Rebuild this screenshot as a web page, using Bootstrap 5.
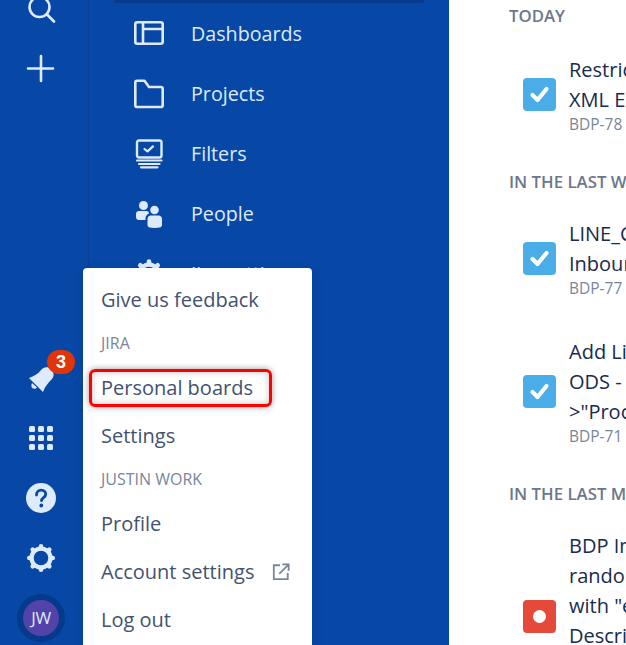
<!DOCTYPE html>
<html lang="en">
<head>
<meta charset="utf-8">
<title>Jira</title>
<link rel="stylesheet" href="https://cdn.jsdelivr.net/npm/bootstrap@5.3.0/dist/css/bootstrap.min.css">
<style>
html,body{height:645px;overflow:hidden;margin:0}
body{font-family:"Open Sans","Noto Sans",sans-serif;background:#fff}
.shell{height:645px;width:626px;overflow:hidden;position:relative}
.rail{width:89px;flex:none;background:#0747a6;border-right:1px solid #0a3f96;color:#deebff}
.rail-top{margin-top:-21px}
.rail-bottom{margin-bottom:-3px}
.rail-slot{height:60px;width:82px;position:relative}
.bell-count{position:absolute;left:47px;top:2px;width:28px;height:24px;background:#de350b;color:#fff;font:700 18px/24px "Liberation Sans",sans-serif;padding:0}
.avatar-ring{width:48px;height:48px;background:#053a8b}
.avatar-core{width:36px;height:36px;background:#5243aa;color:#deebff;font-size:17px;letter-spacing:-.5px}
.panel{width:360px;flex:none;background:#0747a6;color:#deebff;overflow:hidden}
.panel-active{height:3px;margin:0 25px 1px 25px;background:#073a8c;border-radius:0 0 4px 4px}
.panel-item{height:60px;padding-left:45px;gap:27px;font-size:19.7px;line-height:1}
.panel-icon{width:30px;height:30px;flex:none}
.content{flex:1;min-width:0;overflow:hidden;padding-left:60px;white-space:nowrap}
.when{font-size:16.8px;font-weight:600;color:#6b778c;line-height:20px;text-transform:uppercase}
.when-first{margin-top:6px;margin-bottom:29px}
.when-next{margin-top:39px;margin-bottom:27px}
.issue{gap:13px;padding-left:14px}
.issue+.issue{margin-top:40px}
.issue-tall{min-height:170px}
.issue-type{width:33px;height:33px;flex:none}
.issue-title{font-size:20px;line-height:30px;color:#172b4d}
.issue-key{font-size:15.500px;line-height:18px;color:#7a869a}
.user-menu{position:absolute;left:83px;top:268px;width:229px;height:400px;margin:0;padding:0;border:0;border-radius:4px;box-shadow:0 4px 12px rgba(9,30,66,.15);display:block}
.user-menu .dropdown-item{font-size:20px;line-height:28px;color:#42526e;padding:0 0 0 18px;height:48px;display:flex;align-items:center;background:none}
.user-menu .dropdown-header{font-size:16px;line-height:20px;color:#7a869a;padding:0 0 0 18px;height:38px;margin-bottom:2px;display:flex;align-items:center}
.first-entry{margin-top:8px}
.hot-row{position:relative}
.hot-row::after{content:"";position:absolute;left:6px;top:5px;width:183px;height:38px;border:3px solid #f00;border-radius:6px;box-shadow:0 0 6px rgba(0,0,0,.4),inset 0 0 6px rgba(0,0,0,.25);pointer-events:none}
.external{margin-left:18px;width:18px;height:18px;flex:none}
</style>
</head>
<body>
<div class="shell d-flex">
  <nav class="rail d-flex flex-column justify-content-between">
    <div class="rail-top">
      <div class="rail-slot d-flex align-items-center justify-content-center">
        <svg width="30" height="30" viewBox="0 0 30 30" fill="none" stroke="#deebff" stroke-width="2.600" stroke-linecap="round"><circle cx="13.500" cy="13" r="10"/><path d="M21 20.500l7 7"/></svg>
      </div>
      <div class="rail-slot d-flex align-items-center justify-content-center">
        <svg width="30" height="30" viewBox="0 0 30 30" fill="none" stroke="#deebff" stroke-width="2.600" stroke-linecap="round"><path d="M15 2v25M2 14.500h25"/></svg>
      </div>
    </div>
    <div class="rail-bottom">
      <div class="rail-slot d-flex align-items-center justify-content-center">
        <svg width="30" height="30" viewBox="0 0 30 30" fill="#deebff"><path d="M3 15C8 13 12 11 15 7C17 4 22 3 25 6C28 9 28.500 13 26 16C23 19 19 23 17 29Z"/><path d="M6 20L11 24.500C9.500 26.500 6 26 5.500 23.500C5.300 22 5.500 21 6 20Z"/></svg>
        <span class="badge rounded-pill bell-count">3</span>
      </div>
      <div class="rail-slot d-flex align-items-center justify-content-center">
        <svg width="26" height="26" viewBox="0 0 26 26" fill="#deebff"><rect x="1" y="1" width="6" height="6" rx="1.500"/><rect x="10" y="1" width="6" height="6" rx="1.500"/><rect x="19" y="1" width="6" height="6" rx="1.500"/><rect x="1" y="10" width="6" height="6" rx="1.500"/><rect x="10" y="10" width="6" height="6" rx="1.500"/><rect x="19" y="10" width="6" height="6" rx="1.500"/><rect x="1" y="19" width="6" height="6" rx="1.500"/><rect x="10" y="19" width="6" height="6" rx="1.500"/><rect x="19" y="19" width="6" height="6" rx="1.500"/></svg>
      </div>
      <div class="rail-slot d-flex align-items-center justify-content-center">
        <svg width="30" height="30" viewBox="0 0 30 30"><circle cx="15" cy="15" r="15" fill="#deebff"/><path d="M10.500 12c0-3 2-4.800 4.700-4.800s4.500 1.700 4.500 4c0 3.300-4.200 3.400-4.200 6.500" fill="none" stroke="#0747a6" stroke-width="2.800" stroke-linecap="round"/><circle cx="15.300" cy="22.500" r="1.900" fill="#0747a6"/></svg>
      </div>
      <div class="rail-slot d-flex align-items-center justify-content-center">
        <svg width="30" height="30" viewBox="0 0 28 28" fill="none" stroke="#deebff" stroke-linejoin="round"><circle cx="14" cy="14" r="8.800" stroke-width="4"/><g stroke-width="4.200" stroke-linecap="round"><path d="M14 3v1.500M14 23.500V25M3 14h1.500M23.500 14H25M6.200 6.200l1.100 1.100M20.700 20.700l1.100 1.100M6.200 21.800l1.100-1.100M20.700 7.300l1.100-1.100"/></g></svg>
      </div>
      <div class="rail-slot d-flex align-items-center justify-content-center">
        <div class="avatar-ring rounded-circle d-flex align-items-center justify-content-center">
          <div class="avatar-core rounded-circle d-flex align-items-center justify-content-center">JW</div>
        </div>
      </div>
    </div>
  </nav>

  <div class="panel">
    <div class="panel-active"></div>
    <div class="panel-item d-flex align-items-center">
      <svg class="panel-icon" viewBox="0 0 30 30" fill="none" stroke="#deebff" stroke-width="2.600" stroke-linejoin="round"><rect x="1.300" y="3.300" width="27.400" height="21.400" rx="2"/><path d="M9 3.500v21M9 10h19.500"/></svg>
      <span>Dashboards</span>
    </div>
    <div class="panel-item d-flex align-items-center">
      <svg class="panel-icon" viewBox="0 0 30 30" fill="none" stroke="#deebff" stroke-width="2.600" stroke-linejoin="round"><path d="M1.300 3.500c0-1 .8-1.800 1.800-1.800h7.400l4.500 6.300h11.900c1 0 1.800.8 1.800 1.800v16.400c0 1-.8 1.800-1.800 1.800H3.100c-1 0-1.800-.8-1.800-1.800z"/></svg>
      <span>Projects</span>
    </div>
    <div class="panel-item d-flex align-items-center">
      <svg class="panel-icon" viewBox="0 0 30 30" fill="none" stroke="#deebff" stroke-width="2.400" stroke-linejoin="round" stroke-linecap="round"><rect x="3" y="1.500" width="24.500" height="17" rx="2"/><path d="M10.500 10l3 2.400 5.500-5" stroke-width="2.200"/><path d="M3 21.500h24.500M5 25h20.500M7 28.300h16.500" stroke-width="2.200"/></svg>
      <span>Filters</span>
    </div>
    <div class="panel-item d-flex align-items-center">
      <svg class="panel-icon" viewBox="0 0 30 30" fill="#deebff"><circle cx="9.500" cy="6.500" r="4.500"/><circle cx="20.500" cy="11" r="4.300"/><path d="M2 15c0-1.700 1.300-3 3-3h7.500c1.500 0 2.500 1.200 2.500 2.500-2 1-3.500 2.500-3.500 5v1.500H5c-1.700 0-3-1.300-3-3z"/><path d="M13.500 20c0-2 1.500-3.500 3.500-3.500h7.500c2 0 3.500 1.500 3.500 3.500v6c0 1.300-1 2.200-2.300 2.500-3.400.6-6.600.6-10 0-1.300-.3-2.200-1.200-2.200-2.500z"/></svg>
      <span>People</span>
    </div>
    <div class="panel-item d-flex align-items-center">
      <svg class="panel-icon" viewBox="0 0 28 28" fill="none" stroke="#deebff" stroke-linejoin="round"><circle cx="14" cy="14" r="8.800" stroke-width="4"/><path d="M14 2.500v1.500M14 24v1.500M2.500 14H4M24 14h1.500M5.900 5.900l1.100 1.100M21 21l1.100 1.100M5.900 22.100L7 21M21 7l1.100-1.100" stroke-width="4.400" stroke-linecap="round"/></svg>
      <span>Jira settings</span>
    </div>
  </div>

  <main class="content">
    <div class="when when-first">Today</div>
    <div class="issue d-flex align-items-center">
      <svg class="issue-type" viewBox="0 0 33 33"><rect width="33" height="33" rx="4" fill="#4bade8"/><path d="M9.500 17l5 5 9-11" fill="none" stroke="#fff" stroke-width="4.200" stroke-linecap="round" stroke-linejoin="round"/></svg>
      <div><div class="issue-title">Restrict access<br>XML Export</div><div class="issue-key">BDP-78</div></div>
    </div>
    <div class="when when-next">In the last week</div>
    <div class="issue d-flex align-items-center">
      <svg class="issue-type" viewBox="0 0 33 33"><rect width="33" height="33" rx="4" fill="#4bade8"/><path d="M9.500 17l5 5 9-11" fill="none" stroke="#fff" stroke-width="4.200" stroke-linecap="round" stroke-linejoin="round"/></svg>
      <div><div class="issue-title">LINE_CODE<br>Inbound</div><div class="issue-key">BDP-77</div></div>
    </div>
    <div class="issue d-flex align-items-center">
      <svg class="issue-type" viewBox="0 0 33 33"><rect width="33" height="33" rx="4" fill="#4bade8"/><path d="M9.500 17l5 5 9-11" fill="none" stroke="#fff" stroke-width="4.200" stroke-linecap="round" stroke-linejoin="round"/></svg>
      <div><div class="issue-title">Add Line<br>ODS - Data<br>&gt;"Process</div><div class="issue-key">BDP-71</div></div>
    </div>
    <div class="when when-next">In the last month</div>
    <div class="issue issue-tall d-flex align-items-center">
      <svg class="issue-type" viewBox="0 0 33 33"><rect width="33" height="33" rx="4" fill="#e5493a"/><circle cx="16.500" cy="16.500" r="6.500" fill="#fff"/></svg>
      <div class="align-self-start"><div class="issue-title">BDP Import<br>random<br>with "error"<br>Description</div></div>
    </div>
  </main>

  <div class="dropdown-menu user-menu">
    <a class="dropdown-item first-entry" href="#">Give us feedback</a>
    <div class="dropdown-header">JIRA</div>
    <div class="hot-row"><a class="dropdown-item" href="#">Personal boards</a></div>
    <a class="dropdown-item" href="#">Settings</a>
    <div class="dropdown-header">JUSTIN WORK</div>
    <a class="dropdown-item" href="#">Profile</a>
    <a class="dropdown-item" href="#">Account settings
      <svg class="external" viewBox="0 0 20 20" fill="none" stroke="#7a869a" stroke-width="2"><path d="M9 2.500H2v15.500h15.500v-7"/><path d="M8 12L18 2M11.500 1.500H18.500V8.500"/></svg>
    </a>
    <a class="dropdown-item" href="#">Log out</a>
  </div>
</div>
<script src="https://cdn.jsdelivr.net/npm/bootstrap@5.3.0/dist/js/bootstrap.bundle.min.js"></script>
</body>
</html>
